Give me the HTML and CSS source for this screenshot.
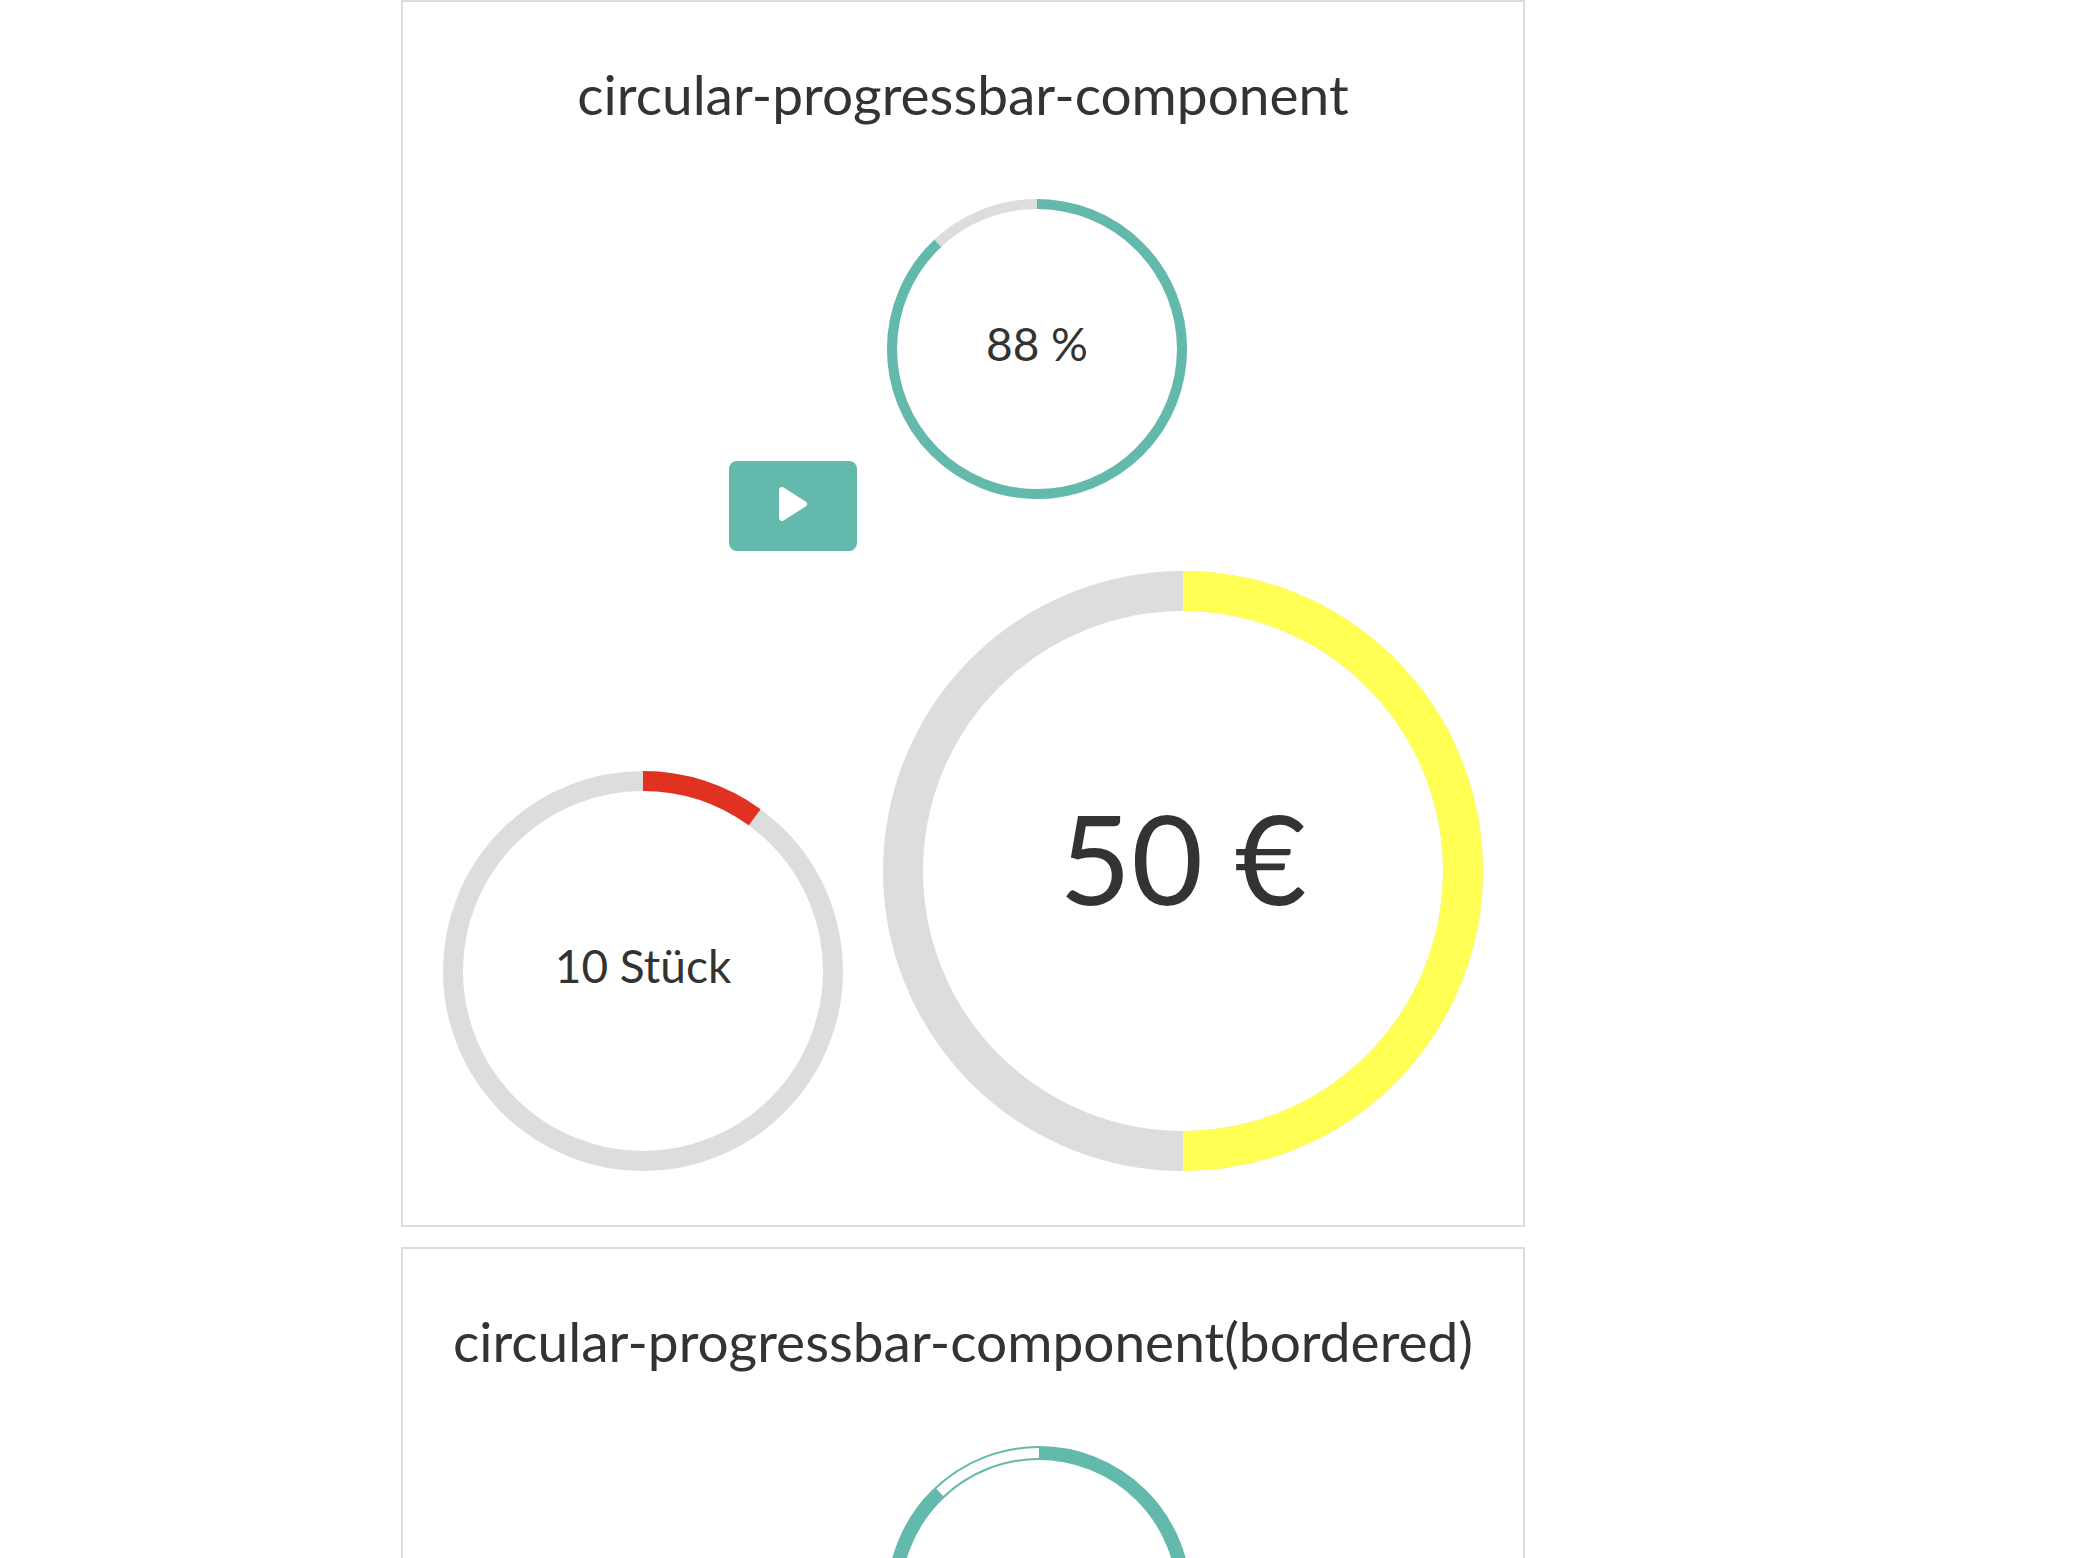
FILE: index.html
```html
<!DOCTYPE html>
<html lang="de">
<head>
<meta charset="utf-8">
<meta name="viewport" content="width=device-width, initial-scale=1">
<title>circular-progressbar-component</title>
<link rel="stylesheet" href="styles.css">
</head>
<body>
<main class="page">
  <section class="card">
    <h2 class="card-title">circular-progressbar-component</h2>
    <div class="row">
      <button class="play" type="button" aria-label="Start">
        <svg class="play-icon" viewBox="0 0 28 34" aria-hidden="true"><path d="M3 3 25 17 3 31Z"/></svg>
      </button>
      <div class="ring ring-small">
        <svg class="ring-svg" viewBox="0 0 300 300" aria-hidden="true">
          <circle class="track" cx="150" cy="150" r="145" stroke-width="10"/>
          <circle class="bar teal" cx="150" cy="150" r="145" stroke-width="10" pathLength="100" stroke-dasharray="88 100" transform="rotate(-90 150 150)"/>
        </svg>
        <span class="ring-label">88 %</span>
      </div>
    </div>
    <div class="row">
      <div class="ring ring-medium">
        <svg class="ring-svg" viewBox="0 0 400 400" aria-hidden="true">
          <circle class="track" cx="200" cy="200" r="190" stroke-width="20"/>
          <circle class="bar red" cx="200" cy="200" r="190" stroke-width="20" pathLength="100" stroke-dasharray="10 100" transform="rotate(-90 200 200)"/>
        </svg>
        <span class="ring-label">10 Stück</span>
      </div>
      <div class="ring ring-large">
        <svg class="ring-svg" viewBox="0 0 600 600" aria-hidden="true">
          <circle class="track" cx="300" cy="300" r="280" stroke-width="40"/>
          <path class="bar yellow" d="M300 20A280 280 0 0 1 300 580" stroke-width="40"/>
        </svg>
        <span class="ring-label">50 €</span>
      </div>
    </div>
  </section>

  <section class="card">
    <h2 class="card-title">circular-progressbar-component(bordered)</h2>
    <div class="row">
      <button class="play" type="button" aria-label="Start">
        <svg class="play-icon" viewBox="0 0 28 34" aria-hidden="true"><path d="M3 3 25 17 3 31Z"/></svg>
      </button>
      <div class="ring ring-bordered">
        <svg class="ring-svg" viewBox="0 0 304 304" aria-hidden="true">
          <circle class="bar teal" cx="152" cy="152" r="145" stroke-width="14"/>
          <circle class="bar rest" cx="152" cy="152" r="145" stroke-width="10" pathLength="100" stroke-dasharray="0 88 12" transform="rotate(-90 152 152)"/>
        </svg>
      </div>
    </div>
  </section>
</main>
</body>
</html>
```
FILE: styles.css
```css
* {
  box-sizing: border-box;
}

body {
  margin: 0;
  background: #fff;
  color: #333;
  font-family: Lato, "Open Sans", sans-serif;
}

.page {
  display: grid;
  grid-template-columns: 401fr minmax(min-content, 1124px) 549fr;
  align-content: start;
  gap: 20px 0;
  height: 100vh;
  overflow: hidden;
}

.card {
  grid-column: 2;
  padding: 58px 0 34px;
  border: 2px solid #ddd;
}

.card-title {
  margin: 0 0 51px;
  font-size: 55px;
  font-weight: 400;
  line-height: 68px;
  text-align: center;
}

.row {
  display: flex;
  justify-content: center;
  align-items: flex-end;
}

.play {
  display: flex;
  justify-content: center;
  align-items: center;
  width: 128px;
  height: 90px;
  margin: 0 10px;
  padding: 0 0 4px;
  border: 0;
  border-radius: 8px;
  background: #62b9ac;
}

.play-icon {
  width: 28px;
  height: 34px;
  fill: #fff;
  stroke: #fff;
  stroke-width: 6px;
  stroke-linejoin: round;
}

.ring {
  display: grid;
  place-items: center;
  margin: 20px;
  font-size: 46px;
  line-height: 60px;
}

.ring-svg,
.ring-label {
  grid-area: 1 / 1;
}

.ring-label {
  padding-bottom: 10px;
}

.ring-svg {
  display: block;
  width: 100%;
  fill: none;
}

.ring-small {
  width: 300px;
  margin-bottom: 52px;
}

.ring-medium {
  width: 400px;
}

.ring-large {
  width: 600px;
  font-size: 124px;
  line-height: 144px;
}

.ring-large .ring-label {
  padding-bottom: 28px;
}

.ring-bordered {
  width: 304px;
  margin: 20px 20px 52px 24px;
}

.track {
  stroke: #ddd;
}

.teal {
  stroke: #62b9ac;
}

.red {
  stroke: #e13120;
}

.yellow {
  stroke: #ffff54;
}

.rest {
  stroke: #fff;
}
```
